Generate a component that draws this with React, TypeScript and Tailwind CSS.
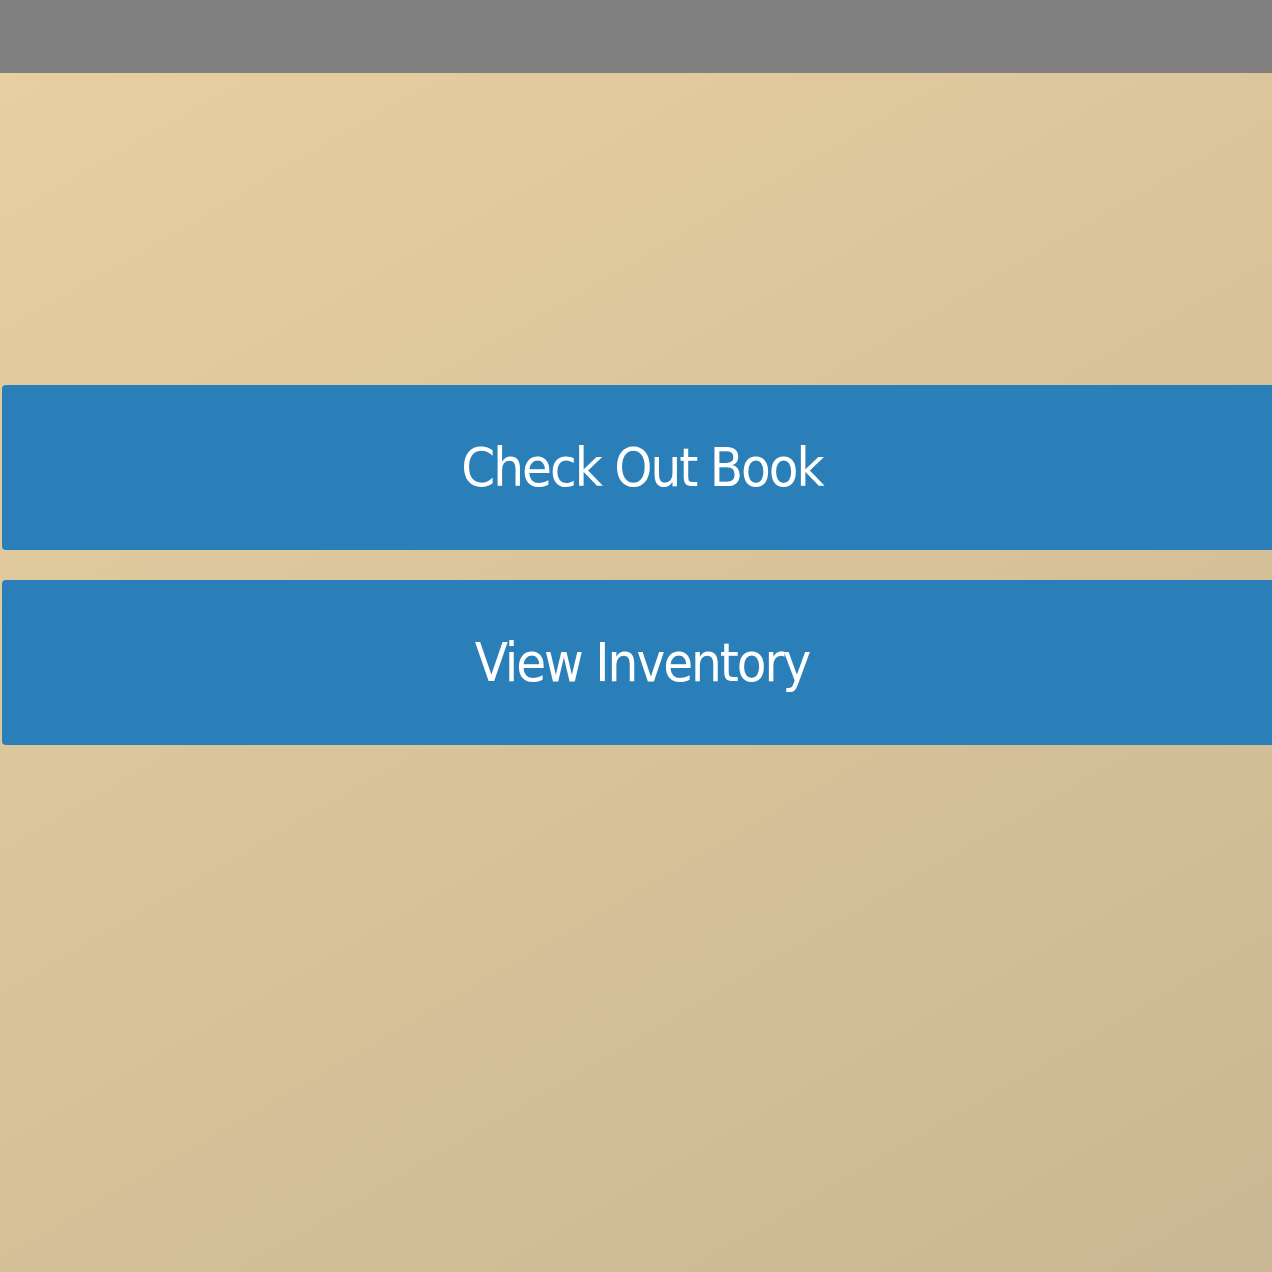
export default function App() {
  return (
    <div className="flex min-h-[1272px] flex-col overflow-hidden bg-[linear-gradient(150deg,#e7d0a1,#cab793)] font-['DejaVu_Sans_Condensed','DejaVu_Sans',sans-serif]">
      <header className="h-[73px] w-full shrink-0 bg-[#808080]" />
      <main className="flex flex-col gap-[30px] pt-[312px]">
        <button className="ml-[2px] flex h-[165px] w-[1280px] shrink-0 items-center justify-center rounded-[4px] bg-[#2a7fb8] text-[54px] tracking-[-2px] text-white">
          Check Out Book
        </button>
        <button className="ml-[2px] flex h-[165px] w-[1280px] shrink-0 items-center justify-center rounded-[4px] bg-[#2a7fb8] text-[54px] tracking-[-2px] text-white">
          View Inventory
        </button>
      </main>
    </div>
  );
}
